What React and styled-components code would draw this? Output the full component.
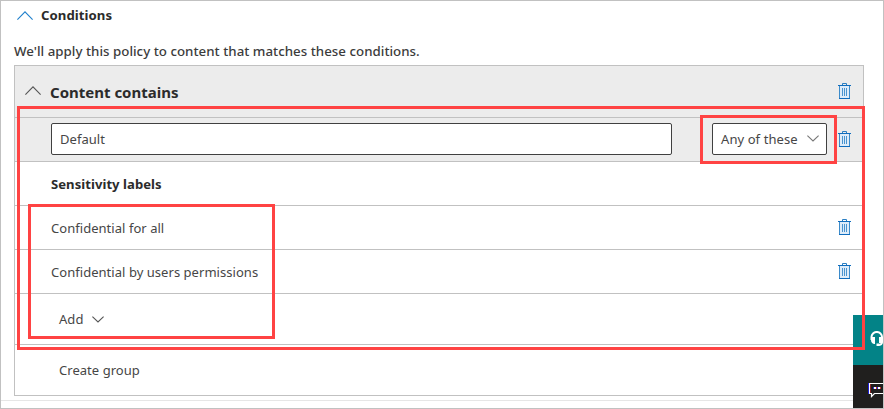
import React from 'react';
import styled, { createGlobalStyle } from 'styled-components';

const GlobalStyle = createGlobalStyle`
  * { box-sizing: border-box; }
  body { margin: 0; background: #fff; }
`;

const Page = styled.main`
  position: relative;
  display: flex;
  flex-direction: column;
  width: 884px;
  height: 409px;
  overflow: hidden;
  border: 1px solid #c1c1c1;
  background: #fff;
  color: #464646;
  font: 400 13px/18px 'Noto Sans', 'Open Sans', sans-serif;
  letter-spacing: 0.04px;
`;

const SectionHeader = styled.header`
  display: flex;
  align-items: center;
  height: 28px;
  padding-left: 16px;
  gap: 8px;
  color: #2b2b2b;
  font-size: 13.2px;
  font-weight: 700;
`;

const Description = styled.p`
  height: 36px;
  margin: 0;
  padding: 13px 0 0 13px;
  color: #3c3c3c;
  font-size: 13.3px;
  font-weight: 500;
  letter-spacing: 0.02px;
`;

const Panel = styled.section`
  display: flex;
  flex-direction: column;
  width: 850px;
  height: 331px;
  margin-left: 13px;
  border: 1px solid #c1c1c1;
`;

const Row = styled.div`
  display: flex;
  flex: none;
  align-items: center;
  height: ${(p) => p.$height || 44}px;
  padding: 0 12px ${(p) => (p.$action ? 0 : 2)}px ${(p) => p.$indent || 36}px;
  border-bottom: ${(p) => (p.$last ? '0' : '1px solid #c1c1c1')};
  background: ${(p) => (p.$shaded ? '#ececec' : '#fff')};
`;

const GroupTitle = styled.h2`
  flex: 1;
  margin: 0 0 0 9px;
  padding-top: 2px;
  color: #2b2b2b;
  font-size: 15px;
  font-weight: 700;
  line-height: 20px;
  letter-spacing: 0;
`;

const ListTitle = styled.h3`
  margin: 0;
  padding-top: 2px;
  color: #2b2b2b;
  font-size: 13.1px;
  font-weight: 700;
`;

const Label = styled.span`
  flex: 1;
  padding-top: 2px;
`;

const NameInput = styled.input`
  width: 621px;
  height: 32px;
  margin-right: 40px;
  padding: 1px 8px 0;
  border: 1px solid #404040;
  border-radius: 2px;
  background: #fff;
  color: inherit;
  font: inherit;
  letter-spacing: inherit;
`;

const Select = styled.button`
  display: flex;
  align-items: center;
  justify-content: space-between;
  width: 115px;
  height: 32px;
  margin-right: auto;
  padding: 0 7px 0 8px;
  border: 1px solid #404040;
  border-radius: 2px;
  background: #fff;
  color: inherit;
  font: inherit;
  letter-spacing: 0.08px;
`;

const TextButton = styled.button`
  display: flex;
  align-items: center;
  gap: 9px;
  padding: 0;
  border: 0;
  background: none;
  color: inherit;
  font: inherit;
  letter-spacing: inherit;
`;

const IconButton = styled.button`
  display: flex;
  padding: 0;
  border: 0;
  background: none;
`;

const BottomRule = styled.hr`
  width: 100%;
  height: 1px;
  margin: 4px 0 0;
  border: 0;
  background: #e6e6e6;
`;

const SideDock = styled.aside`
  position: absolute;
  top: 314px;
  right: 0;
  display: flex;
  flex-direction: column;
  width: 30px;
`;

const DockButton = styled.button`
  display: flex;
  align-items: center;
  height: 50px;
  padding: 0 0 ${(p) => p.$lift || 0}px ${(p) => p.$inset}px;
  border: 0;
  background: ${(p) => p.$color};
  overflow: hidden;
  svg { flex: none; }
`;

const Highlight = styled.div`
  position: absolute;
  left: ${(p) => p.$x - 1}px;
  top: ${(p) => p.$y - 1}px;
  width: ${(p) => p.$w}px;
  height: ${(p) => p.$h}px;
  border: 3px solid #ff4343;
  pointer-events: none;
`;

const Chevron = ({ up, width = 16, height = 9, color = '#555' }) => (
  <svg width={width} height={height} viewBox={`0 0 ${width} ${height}`} fill="none" stroke={color} strokeWidth="1.1">
    <path
      d={
        up
          ? `M.4 ${height - 0.4} L${width / 2} .8 L${width - 0.4} ${height - 0.4}`
          : `M.4 .6 L${width / 2} ${height - 1} L${width - 0.4} .6`
      }
    />
  </svg>
);

const TrashIcon = () => (
  <svg width="13" height="16" viewBox="0 0 13 16" fill="none">
    <path d="M2 3H11V15H2Z" fill="#deecf9" />
    <path d="M4.5 2V.5H8.5V2" stroke="#2b7fc3" />
    <path d="M0 2.5H13" stroke="#0f6cbd" />
    <path d="M1.5 3V15M11.5 3V15" stroke="#3c8bca" />
    <path d="M1 15.5H12" stroke="#0f6cbd" />
    <path d="M4.5 5V13M6.5 5V13M8.5 5V13" stroke="#4a94cf" />
  </svg>
);

const Delete = () => (
  <IconButton aria-label="Delete">
    <TrashIcon />
  </IconButton>
);

const HeadsetIcon = () => (
  <svg width="14" height="16" viewBox="0 0 14 16" fill="none">
    <path d="M1.500 9V6a5 4.800 0 0 1 10.500 0V11q0 3-4 3" stroke="#fff" strokeWidth="2" />
    <path d="M1 6h4v7H4Q1 12 1 9ZM9 6h3.500v6H9Z" fill="#fff" />
    <path d="M6.500 12.500h3v2.500H6.500Z" fill="#fff" />
  </svg>
);

const ChatIcon = () => (
  <svg width="18" height="16" viewBox="0 0 18 16" fill="none">
    <path d="M1.500 1.500H17V11.500H6.500L3.500 14.500V11.500H1.500Z" stroke="#fff" strokeWidth="1.200" />
    <path d="M.5 1V12" stroke="#2020d8" />
    <path d="M2.500 2V11" stroke="#8a2424" />
    <path d="M6 5H8V7H6ZM10 5H12V7H10Z" fill="#fff" />
    <path d="M5.500 5V7M9.500 5V7" stroke="#3030e0" />
    <path d="M8.500 5V7M12.500 5V7" stroke="#c03030" />
  </svg>
);

const labels = ['Confidential for all', 'Confidential by users permissions'];

export default function App() {
  return (
    <Page>
      <GlobalStyle />
      <SectionHeader>
        <Chevron up color="#2080cc" />
        Conditions
      </SectionHeader>
      <Description>We'll apply this policy to content that matches these conditions.</Description>
      <Panel>
        <Row $height={52} $indent={10} $shaded>
          <Chevron up />
          <GroupTitle>Content contains</GroupTitle>
          <Delete />
        </Row>
        <Row $shaded>
          <NameInput aria-label="Group name" defaultValue="Default" />
          <Select>
            Any of these
            <Chevron width={12} height={7} color="#777" />
          </Select>
          <Delete />
        </Row>
        <Row>
          <ListTitle>Sensitivity labels</ListTitle>
        </Row>
        {labels.map((label) => (
          <Row key={label}>
            <Label>{label}</Label>
            <Delete />
          </Row>
        ))}
        <Row $height={51} $indent={44} $action>
          <TextButton>
            Add
            <Chevron width={12} height={7} />
          </TextButton>
        </Row>
        <Row $height={50} $indent={44} $action $last>
          <TextButton>Create group</TextButton>
        </Row>
      </Panel>
      <BottomRule />
      <SideDock>
        <DockButton $color="#038387" $inset={17} $lift={2} aria-label="Help">
          <HeadsetIcon />
        </DockButton>
        <DockButton $color="#201f1e" $inset={15} $lift={1} aria-label="Feedback">
          <ChatIcon />
        </DockButton>
      </SideDock>
      <Highlight $x={17} $y={106} $w={848} $h={244} />
      <Highlight $x={700} $y={115} $w={137} $h={49} />
      <Highlight $x={28} $y={204} $w={247} $h={135} />
    </Page>
  );
}
